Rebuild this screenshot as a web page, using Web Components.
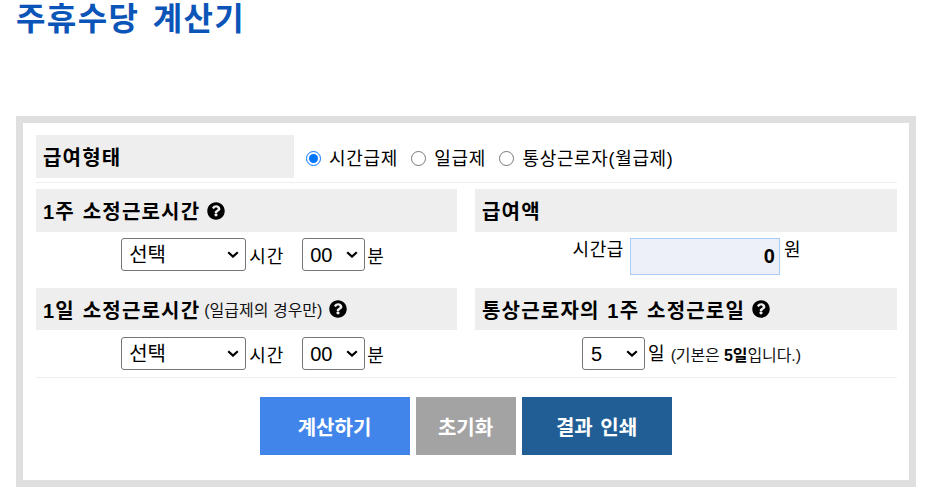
<!DOCTYPE html>
<html lang="ko"><head><meta charset="utf-8"><title>주휴수당 계산기</title>
<style>
html,body{margin:0;padding:0;background:#fff}
body{font-family:"Liberation Sans","Noto Sans CJK KR",sans-serif;color:#000;height:488px;overflow:hidden}
</style></head><body>
<pay-calculator></pay-calculator>
<template id="t-calc"><style>
:host{display:block;padding:0 13px 0 16px}
h1{margin:0 0 0 0;padding-top:1px;height:116px;font-size:32px;line-height:36px;font-weight:700;color:#0b54b8;letter-spacing:1.4px;word-spacing:3px;box-sizing:border-box}
.frame{width:900px;height:371px;box-sizing:border-box;border:7px solid #dfdfdf;padding:12px 12px 0 13px;display:flex;flex-direction:column}
.type{display:flex;align-items:stretch;border-bottom:1px solid #eee;height:47px}
.type section-head{width:258px;height:43px;flex:none}
.radios{display:flex;align-items:center;height:43px;padding-left:12px}
.grid{display:grid;grid-template-columns:421px 422px;column-gap:18px;padding-top:6px;height:195px;box-sizing:border-box;border-bottom:1px solid #eee}
.cell{height:99px}
.cell.b{height:89px}
.cell.b>:last-child{margin-top:1px}
.foot{display:flex;justify-content:center;gap:6px;padding:19px 2px 0 0}
</style>
<h1>주휴수당 계산기</h1>
<div class="frame">
 <div class="type"><section-head>급여형태</section-head>
  <div class="radios"><pay-radio checked>시간급제</pay-radio><pay-radio>일급제</pay-radio><pay-radio>통상근로자(월급제)</pay-radio></div>
 </div>
 <div class="grid">
  <div class="cell"><section-head help>1주 소정근로시간</section-head><time-pick></time-pick></div>
  <div class="cell"><section-head>급여액</section-head><wage-output></wage-output></div>
  <div class="cell b"><section-head help tall="42">1일 소정근로시간<small slot="note">(일급제의 경우만)</small></section-head><time-pick></time-pick></div>
  <div class="cell b"><section-head help tall="42">통상근로자의 1주 소정근로일</section-head><days-pick></days-pick></div>
 </div>
 <div class="foot">
  <action-button color="#4285ea" width="150">계산하기</action-button>
  <action-button color="#a3a3a3" width="100">초기화</action-button>
  <action-button color="#215e96" width="150">결과 인쇄</action-button>
 </div>
</div></template>
<template id="t-head"><style>
:host{display:flex;align-items:center;background:#eee;height:43px;box-sizing:border-box;padding:0 7px;font-size:20px;font-weight:700;letter-spacing:1.2px;word-spacing:1px;white-space:pre}
:host([tall]){height:42px}
::slotted(small){font-size:16px;font-weight:400;letter-spacing:0;word-spacing:0;color:#111;margin-left:4px}
svg{width:18px;height:18px;margin-left:7px;flex:none}
</style><slot></slot><slot name="note"></slot><svg id="q" viewBox="0 0 512 512"><path d="M504 256c0 137-111 248-248 248S8 393 8 256 119 8 256 8s248 111 248 248zM263 90c-54 0-89 23-116 64-4 5-3 12 3 16l35 26c5 4 13 3 17-2 18-23 30-36 57-36 20 0 45 13 45 33 0 15-12 22-32 33-23 13-54 30-54 71v6c0 7 5 12 12 12h56c7 0 12-5 12-12v-3c0-29 83-30 83-107 0-58-60-101-118-101zm-7 230c-25 0-46 21-46 46s21 46 46 46 46-21 46-46-21-46-46-46z"/></svg></template>
<template id="t-radio"><style>
:host{display:inline-flex;align-items:center;font-size:18px;letter-spacing:.65px;margin-right:13.5px;white-space:nowrap}
input{margin:3px 8px 0 0;width:15px;height:15px;flex:none}
</style><input type="radio" name="k"><span><slot></slot></span></template>
<template id="t-time"><style>
:host{display:flex;justify-content:center;align-items:center;padding-top:6px;padding-left:13px;font-size:18px;letter-spacing:.95px;height:33px}
select{appearance:none;font:20px "Liberation Sans","Noto Sans CJK KR",sans-serif;height:33px;box-sizing:border-box;color:#000;border:1px solid #767676;border-radius:3px;padding:0 0 0 7px;letter-spacing:0;background:#fff url("data:image/svg+xml,%3Csvg xmlns='http://www.w3.org/2000/svg' width='12' height='7'%3E%3Cpath d='M1.2 1.2 6 5.6l4.8-4.4' fill='none' stroke='%23000' stroke-width='2.2'/%3E%3C/svg%3E") no-repeat right 6px center}
.h{width:125px}.m{width:63px;margin-left:18px}
span{margin-left:3px}
span:last-child{margin-left:2px}
</style><select class="h"><option>선택</option></select><span>시간</span><select class="m"><option>00</option></select><span>분</span></template>
<template id="t-days"><style>
:host{display:flex;justify-content:center;padding-top:6px;padding-left:11px;font-size:18px;height:33px;align-items:center;white-space:pre}
select{appearance:none;font:20px "Liberation Sans","Noto Sans CJK KR",sans-serif;width:63px;height:33px;box-sizing:border-box;color:#000;border:1px solid #767676;border-radius:3px;padding:0 0 0 8px;background:#fff url("data:image/svg+xml,%3Csvg xmlns='http://www.w3.org/2000/svg' width='12' height='7'%3E%3Cpath d='M1.2 1.2 6 5.6l4.8-4.4' fill='none' stroke='%23000' stroke-width='2.2'/%3E%3C/svg%3E") no-repeat right 6px center}
span{margin-left:3px;position:relative;top:-2px}
small{font-size:16px;color:#111;margin-left:6px;letter-spacing:-.1px}
b{color:#000}
</style><select><option>5</option></select><span>일</span><small>(기본은 <b>5일</b>입니다.)</small></template>
<template id="t-wage"><style>
:host{display:flex;justify-content:center;padding-top:6px;padding-left:2px;font-size:18px;letter-spacing:.95px;height:37px;white-space:nowrap}
.l{margin-right:6px;line-height:25px;letter-spacing:.6px}
.u{margin-left:4px;line-height:25px}
input{width:150px;height:37px;box-sizing:border-box;border:1px solid #a8cdf8;background:#edf1f7;text-align:right;font:700 20px "Liberation Sans",sans-serif;padding:0 4px 0 0;color:#000;outline:none}
</style><span class="l">시간급</span><input value="0" readonly><span class="u">원</span></template>
<template id="t-btn"><style>
:host{display:block}
button{display:block;height:58px;border:0;border-radius:0;color:#fff;font:700 20px "Liberation Sans","Noto Sans CJK KR",sans-serif;padding:0;word-spacing:2px}
</style><button><slot></slot></button></template>
<script>
function def(name,tpl,init){customElements.define(name,class extends HTMLElement{constructor(){super();const r=this.attachShadow({mode:"open"});r.appendChild(document.getElementById(tpl).content.cloneNode(true));}connectedCallback(){init&&init.call(this,this.shadowRoot);}});}
def("section-head","t-head",function(r){if(!this.hasAttribute("help"))r.getElementById("q").remove();});
def("pay-radio","t-radio",function(r){if(this.hasAttribute("checked"))r.querySelector("input").checked=true;});
def("time-pick","t-time");
def("days-pick","t-days");
def("wage-output","t-wage");
def("action-button","t-btn",function(r){const b=r.querySelector("button");b.style.background=this.getAttribute("color");b.style.width=this.getAttribute("width")+"px";});
def("pay-calculator","t-calc");
</script>
</body></html>
